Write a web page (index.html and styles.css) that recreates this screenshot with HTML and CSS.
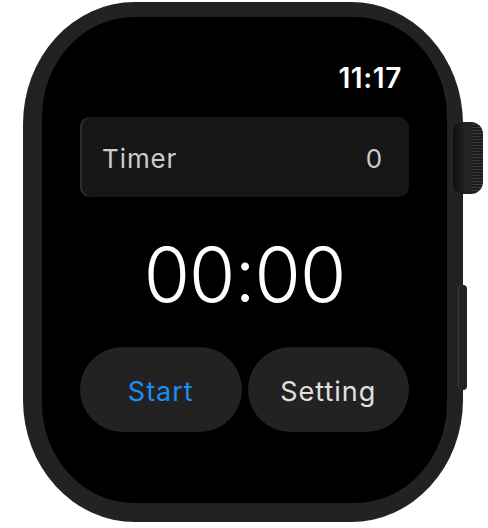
FILE: index.html
```html
<!DOCTYPE html>
<html>
<head>
<meta charset="utf-8">
<link rel="stylesheet" href="styles.css">
</head>
<body>
<div class="watch">
  <div class="case">
    <div class="screen">
      <div class="status"><span class="clock">11:17</span></div>
      <div class="card"><span class="card-label">Timer</span><span class="card-value">0</span></div>
      <div class="display">00:00</div>
      <div class="buttons">
        <div class="btn btn-start">Start</div>
        <div class="btn btn-setting">Setting</div>
      </div>
    </div>
  </div>
  <div class="crown"></div>
  <div class="side-button"></div>
</div>
</body>
</html>
```
FILE: styles.css
```css
html, body {
  margin: 0;
  padding: 0;
  background: #ffffff;
  width: 488px;
  height: 528px;
  overflow: hidden;
  font-family: "Inter", "Roboto", sans-serif;
}
.watch {
  position: relative;
  width: 488px;
  height: 528px;
}
.case {
  position: absolute;
  left: 23px;
  top: 2px;
  width: 440px;
  height: 520px;
  box-sizing: border-box;
  padding: 15px 16px 19px 19px;
  background: #222222;
  border-radius: 112px / 122px;
}
.screen {
  width: 100%;
  height: 100%;
  background: #000000;
  border-radius: 92px / 100px;
  box-sizing: border-box;
  padding: 0 38px;
  display: flex;
  flex-direction: column;
}
.status {
  display: flex;
  justify-content: flex-end;
  padding-top: 46px;
  padding-right: 7px;
  height: 30px;
}
.clock {
  color: #ffffff;
  font-weight: 600;
  font-size: 28px;
  line-height: 30px;
  letter-spacing: 0.6px;
}
.card {
  margin-top: 24px;
  height: 80px;
  background: #161616;
  border-radius: 10px;
  box-shadow: inset 2px 0 0 #2e2e2e;
  display: flex;
  align-items: center;
  justify-content: space-between;
  padding: 2px 26px 0 22px;
  box-sizing: border-box;
  color: #cccccc;
  font-size: 26px;
  letter-spacing: 0.9px;
}
.display {
  margin-top: 33px;
  height: 90px;
  line-height: 90px;
  text-align: center;
  color: #ffffff;
  font-size: 75px;
  font-weight: 300;
  letter-spacing: -1px;
}
.buttons {
  margin-top: 27px;
  display: flex;
  gap: 6px;
}
.btn {
  flex: 1;
  height: 85px;
  border-radius: 43px;
  background: #222222;
  display: flex;
  align-items: center;
  justify-content: center;
  font-size: 27px;
  letter-spacing: 1px;
  padding-top: 4px;
  box-sizing: border-box;
}
.btn-start { color: #1a8ef2; }
.btn-setting { color: #e0e0e0; }
.crown {
  position: absolute;
  left: 453px;
  top: 122px;
  width: 30px;
  height: 72px;
  border-radius: 10px 12px 12px 10px;
  background:
    repeating-linear-gradient(to bottom, #1c1c1c 0, #1c1c1c 2px, #3a3a3a 2px, #3a3a3a 3px) right / 11px 100% no-repeat,
    linear-gradient(to right, #0e0e0e 0, #222 40%, #262626 100%);
}
.side-button {
  position: absolute;
  left: 458px;
  top: 285px;
  width: 9px;
  height: 105px;
  border-radius: 4px;
  background: #222222;
  box-shadow: inset 1px 0 0 #3a3a3a;
}
```
